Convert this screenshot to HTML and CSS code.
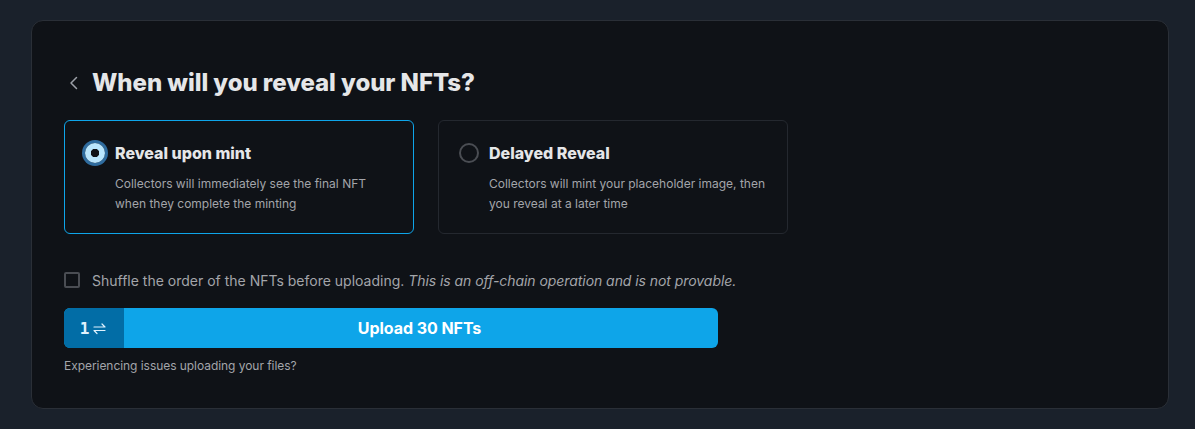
FILE: index.html
```html
<!DOCTYPE html>
<html lang="en">
<head>
    <meta charset="UTF-8">
    <meta name="viewport" content="width=device-width, initial-scale=1.0">
    <title>Reveal NFTs</title>
    <link rel="stylesheet" href="styles.css">
</head>
<body>
    <div class="card">
        <div class="heading">
            <svg class="back-icon" width="20" height="20" viewBox="0 0 20 20" fill="none" stroke="currentColor" stroke-width="1.5" stroke-linecap="round" stroke-linejoin="round">
                <path d="M12.5 4.5 7 10l5.5 5.5"/>
            </svg>
            <h1>When will you reveal your NFTs?</h1>
        </div>
        <div class="options">
            <div class="option selected">
                <div class="option-title">
                    <span class="radio"></span>
                    <span>Reveal upon mint</span>
                </div>
                <p>Collectors will immediately see the final NFT<br>when they complete the minting</p>
            </div>
            <div class="option">
                <div class="option-title">
                    <span class="radio"></span>
                    <span>Delayed Reveal</span>
                </div>
                <p>Collectors will mint your placeholder image, then<br>you reveal at a later time</p>
            </div>
        </div>
        <label class="shuffle">
            <span class="checkbox"></span>
            <span>Shuffle the order of the NFTs before uploading. <em>This is an off-chain operation and is not provable.</em></span>
        </label>
        <div class="upload">
            <div class="chain">
                <span class="chain-count">1</span>
                <svg width="13" height="13" viewBox="0 0 13 13" fill="none" stroke="currentColor" stroke-width="1.2" stroke-linecap="round" stroke-linejoin="round">
                    <path d="M1 5h11L9 2"/>
                    <path d="M12 8.5H1l3 3"/>
                </svg>
            </div>
            <div class="upload-label">Upload 30 NFTs</div>
        </div>
        <div class="help">Experiencing issues uploading your files?</div>
    </div>
</body>
</html>
```

FILE: styles.css
```css
body {
    font-family: Inter, "Liberation Sans", sans-serif;
    background-color: #1a212b;
    color: #e5e7eb;
    margin: 0;
    padding: 20px 26px 20px 31px;
}
.card {
    box-sizing: border-box;
    height: 389px;
    padding: 46px 32px 0;
    background-color: #0f1217;
    border: 1px solid #2a2f37;
    border-radius: 12px;
}
.heading {
    display: flex;
    align-items: center;
    gap: 8px;
    height: 32px;
}
.back-icon {
    color: #9ca0a8;
    flex-shrink: 0;
}
h1 {
    margin: 0;
    font-size: 24px;
    line-height: 32px;
    font-weight: 800;
    letter-spacing: -0.06px;
    color: #e5e6e8;
}
.options {
    display: flex;
    gap: 24px;
    margin-top: 21px;
}
.option {
    box-sizing: border-box;
    width: 350px;
    height: 114px;
    padding: 19px 20px 0;
    border: 1px solid #24282f;
    border-radius: 6px;
}
.option.selected {
    border-color: #0ea5e9;
}
.option-title {
    display: flex;
    align-items: center;
    gap: 10px;
    height: 26px;
    font-size: 16px;
    font-weight: 800;
    color: #e5e6e8;
}
.radio {
    box-sizing: border-box;
    width: 20px;
    height: 20px;
    border: 2px solid #4a4d53;
    border-radius: 50%;
}
.selected .radio {
    border: none;
    background: radial-gradient(circle, #0f1217 0 4px, #bae6fd 4.5px);
    box-shadow: 0 0 0 3px #2f6c9f;
}
.option p {
    margin: 8px 0 0 30px;
    font-size: 12px;
    line-height: 19.5px;
    color: #a3a5aa;
}
.shuffle {
    display: flex;
    align-items: center;
    gap: 12px;
    margin-top: 36px;
    height: 20px;
    font-size: 14px;
    color: #a3a5aa;
}
.shuffle em {
    letter-spacing: -0.06px;
}
.checkbox {
    box-sizing: border-box;
    width: 16px;
    height: 16px;
    border: 2px solid #4a4d53;
    border-radius: 2px;
}
.upload {
    display: flex;
    width: 654px;
    height: 40px;
    margin-top: 18px;
    border-radius: 6px;
    overflow: hidden;
    background-color: #0ea5e9;
}
.chain {
    display: flex;
    align-items: center;
    justify-content: center;
    gap: 4px;
    box-sizing: border-box;
    width: 60px;
    padding-right: 2px;
    background-color: #026da6;
    color: #e0f2fe;
}
.chain-count {
    font-family: "DejaVu Sans Mono", monospace;
    font-size: 16px;
    font-weight: 700;
}
.upload-label {
    flex: 1;
    padding-right: 3px;
    text-align: center;
    line-height: 40px;
    font-size: 16px;
    font-weight: 700;
    letter-spacing: -0.05px;
    color: #ffffff;
}
.help {
    margin-top: 10px;
    font-size: 12px;
    line-height: 16px;
    letter-spacing: -0.05px;
    color: #a3a5aa;
}
```
